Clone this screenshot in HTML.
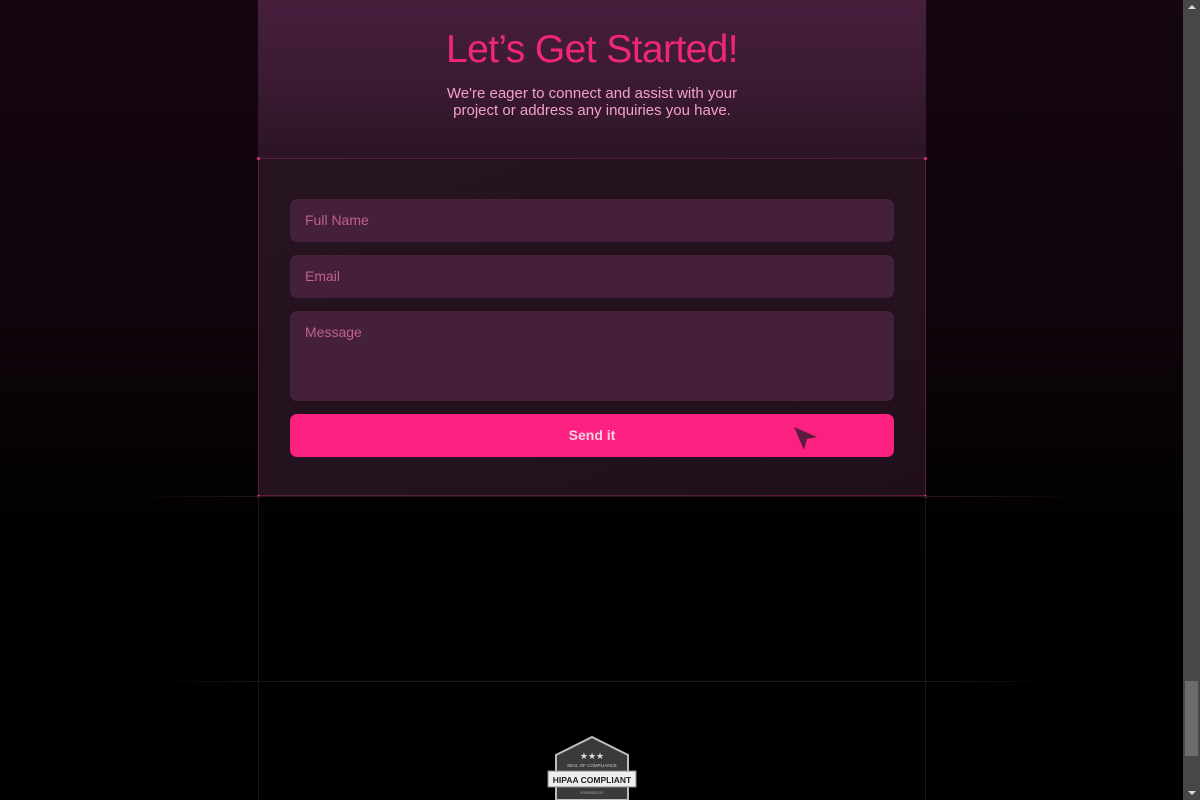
<!DOCTYPE html>
<html><head><style>
*{margin:0;padding:0;box-sizing:border-box}
body{width:1200px;height:800px;overflow:hidden;background:linear-gradient(180deg,#15060f 0%,#0e040b 40%,#030102 62%,#000 75%);font-family:"Liberation Sans",sans-serif;position:relative}
.sb{position:absolute;right:0;top:0;width:17px;height:800px;background:#474747}
.thumb{position:absolute;right:2px;top:681px;width:13px;height:75px;background:#6b6b6b}
.arr{position:absolute;right:4px;width:0;height:0;border-left:4px solid transparent;border-right:4px solid transparent}
.panel-top{position:absolute;left:258px;top:0;width:668px;height:158px;background:linear-gradient(180deg,#461f3d 0%,#3a1a32 55%,#2b1425 100%)}
.panel-form{position:absolute;left:258px;top:158px;width:668px;height:338px;background:linear-gradient(160deg,#25131f 0%,#25121f 60%,#1f0f1a 100%);border:1px solid rgba(220,50,120,.3)}
h1{position:absolute;left:258px;width:668px;top:28px;text-align:center;color:#f0257b;font-size:39px;font-weight:400;letter-spacing:-0.6px}
.sub{position:absolute;left:258px;width:668px;top:85px;text-align:center;color:#f3a0c8;font-size:15px;line-height:17px}
.in{position:absolute;left:290px;width:604px;background:#45203b;border-radius:7px;color:#c2608f;font-size:14px;padding-left:15px}
.btn{position:absolute;left:290px;top:414px;width:604px;height:43px;background:#fc2080;border-radius:7px;color:#f6d2e4;font-size:14px;font-weight:bold;text-align:center;line-height:43px}
.dot{position:absolute;width:3px;height:3px;background:#e0336f;border-radius:50%}
.hl{position:absolute;height:1px}
.vl{position:absolute;width:1px;background:#1e1417}
</style></head><body>
<div class="panel-top"></div>
<div class="panel-form"></div>
<h1>Let’s Get Started!</h1>
<div class="sub">We're eager to connect and assist with your<br>project or address any inquiries you have.</div>
<div class="in" style="top:199px;height:43px;line-height:43px">Full Name</div>
<div class="in" style="top:255px;height:43px;line-height:43px">Email</div>
<div class="in" style="top:311px;height:90px;padding-top:13px">Message</div>
<div class="btn">Send it</div>
<svg style="position:absolute;left:793px;top:425px" width="26" height="26" viewBox="0 0 26 26"><path d="M1 2 L24 12 L14 14 L11 25 Z" fill="#5a1d3f"/></svg>
<div class="dot" style="left:257px;top:157px"></div><div class="dot" style="left:924px;top:157px"></div>
<div class="dot" style="left:257px;top:495px"></div><div class="dot" style="left:924px;top:495px"></div>
<div class="hl" style="left:128px;top:496px;width:960px;background:linear-gradient(90deg,transparent,#2a1620 15%,#2a1620 85%,transparent)"></div>
<div class="hl" style="left:150px;top:681px;width:910px;background:linear-gradient(90deg,transparent,#1c1c1c 15%,#1c1c1c 85%,transparent)"></div>
<div class="vl" style="left:258px;top:497px;height:303px"></div>
<div class="vl" style="left:925px;top:497px;height:303px"></div>
<svg style="position:absolute;left:546px;top:735px" width="92" height="65" viewBox="0 0 92 65">
<path d="M46 2 L82 20 L82 65 L10 65 L10 20 Z" fill="#3a3a3a" stroke="#bdbdbd" stroke-width="2"/>
<text x="46" y="24" fill="#ddd" font-size="9" text-anchor="middle">★★★</text>
<text x="46" y="32" fill="#ccc" font-size="4.5" text-anchor="middle" font-family="Liberation Sans">SEAL OF COMPLIANCE</text>
<rect x="2" y="36" width="88" height="16" fill="#eee" stroke="#888"/>
<text x="46" y="48" fill="#222" font-size="8.5" font-weight="bold" text-anchor="middle" font-family="Liberation Sans">HIPAA COMPLIANT</text>
<text x="46" y="59" fill="#aaa" font-size="3.5" text-anchor="middle" font-family="Liberation Sans">POWERED BY</text>
</svg>
<div class="sb"><div class="arr" style="top:5px;border-bottom:4px solid #ddd"></div><div class="thumb"></div><div class="arr" style="bottom:5px;border-top:4px solid #ddd"></div></div>
</body></html>
